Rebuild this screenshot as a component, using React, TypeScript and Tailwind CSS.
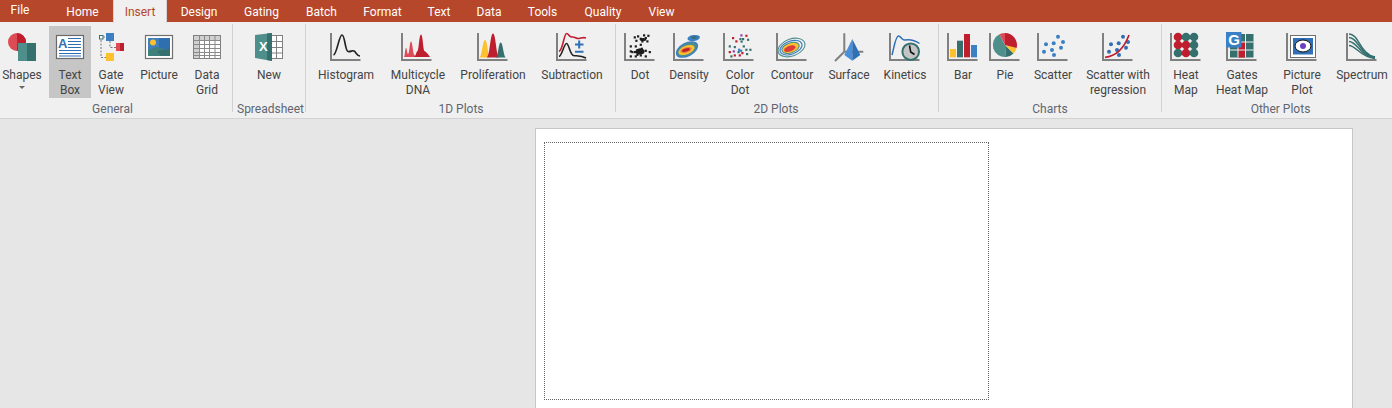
import type { ReactNode } from "react"

const RED = "#BE1E2D"
const LIGHT_RED = "#DD4B55"
const TEAL = "#35706E"
const LIGHT_TEAL = "#4F8F8B"
const BLUE = "#3B7FC4"
const YELLOW = "#FDC12E"
const PURPLE = "#8A3FB0"

function Svg({ children }: { children: ReactNode }) {
  return (
    <svg width="32" height="32" viewBox="0 0 32 32" className="block shrink-0">
      {children}
    </svg>
  )
}

// L shaped plot axes shared by most of the icons
function Axes() {
  return <path d="M1 3V30H30.5" fill="none" stroke="#808080" strokeWidth="2" />
}

function Plot({ children }: { children: ReactNode }) {
  return (
    <Svg>
      <Axes />
      {children}
    </Svg>
  )
}

const ShapesIcon = () => (
  <Svg>
    <circle cx="11" cy="12" r="9" fill={LIGHT_RED} />
    <path d="M11 3a9 9 0 0 1 0 18z" fill={RED} />
    <rect x="12" y="13" width="9" height="18" fill={LIGHT_TEAL} />
    <rect x="21" y="13" width="9" height="18" fill={TEAL} />
  </Svg>
)

const TextBoxIcon = () => (
  <Svg>
    <rect x="2.5" y="5.5" width="27" height="23" fill="#fff" stroke="#6A6A6A" strokeWidth="1.2" />
    <text x="4" y="18" fontSize="13" fontWeight="700" fontFamily="Liberation Sans, sans-serif" fill="#2F6FB5">
      A
    </text>
    <path d="M14 8.5H27M14 11.5H27M14 14.5H27M14 17.5H27M5 20.5H27M5 23.5H27M5 26H27" stroke="#2F6FB5" />
  </Svg>
)

const GateViewIcon = () => (
  <Svg>
    <rect x="4.5" y="5.5" width="3.5" height="3.5" fill="#fff" stroke={TEAL} />
    <path d="M6 10V27.5H11M8 7H11M15 11V17.5H21" fill="none" stroke="#777" strokeDasharray="2 1.5" />
    <rect x="11" y="3" width="8" height="8" fill={BLUE} />
    <rect x="21" y="13" width="4" height="8" fill={LIGHT_RED} />
    <rect x="25" y="13" width="4" height="8" fill={RED} />
    <rect x="11" y="23" width="8" height="8" fill={YELLOW} />
  </Svg>
)

const PictureIcon = () => (
  <Svg>
    <rect x="2.5" y="5.5" width="27" height="23" fill="#fff" stroke="#6F6F6F" strokeWidth="1.2" />
    <rect x="5" y="8" width="22" height="18" fill="#3F7FBE" />
    <rect x="16" y="8" width="11" height="12" fill="#2F6FB0" />
    <circle cx="10" cy="12.5" r="3" fill={YELLOW} />
    <path d="M5 20L14 17L27 21V26H5Z" fill="#3F7F7C" />
    <path d="M14 21L27 19V26H18Z" fill={TEAL} />
  </Svg>
)

const DataGridIcon = () => (
  <Svg>
    <rect x="2.5" y="5.5" width="27" height="23" fill="#fff" stroke="#7F7F7F" />
    <rect x="3" y="6" width="26" height="4" fill="#D0D0D0" />
    <rect x="3" y="6" width="5" height="22" fill="#D0D0D0" />
    <path
      d="M8.5 5.5V28.5M13.5 5.5V28.5M18.5 5.5V28.5M24 5.5V28.5M2.5 10.5H29.5M2.5 14.5H29.5M2.5 18.5H29.5M2.5 22.5H29.5M2.5 25.5H29.5"
      stroke="#8A8A8A"
      fill="none"
    />
  </Svg>
)

const ExcelIcon = () => (
  <Svg>
    <rect x="18.5" y="5.5" width="11" height="23" fill="#fff" stroke="#808080" />
    <path d="M18.5 11.5H29.5M18.5 17.5H29.5M18.5 23H29.5M23.5 5.5V28.5" stroke="#808080" />
    <path d="M2 5L19 3V31L2 28Z" fill={LIGHT_TEAL} />
    <path d="M14 3.5L19 3V31L14 30Z" fill={TEAL} />
    <text x="6" y="21" fontSize="13" fontWeight="700" fontFamily="Liberation Sans, sans-serif" fill="#fff">
      X
    </text>
  </Svg>
)

const HistogramIcon = () => (
  <Plot>
    <path d="M3.5 25C7 24 9 5 12 5C15 5 15 21 18 21.5C21 22 22 20 24 21C26 22 27 26 30 26" fill="none" stroke="#222" strokeWidth="1.7" />
  </Plot>
)

const MulticycleIcon = () => (
  <Plot>
    <path d="M3 27C4 26 4 18 5 18C6 18 6 24 7 24C8.5 24 8.5 11.5 10 11.5C11.5 11.5 12 25 13.5 25L15 27Z" fill={LIGHT_RED} />
    <path d="M13 27C15 26 15 22 16.5 21C18 20 18 4.5 20 4.5C22 4.5 22 20 23.5 21C25 22 26 22.5 29 27Z" fill={RED} />
  </Plot>
)

const ProliferationIcon = () => (
  <Plot>
    <path d="M2.5 27.5C5 27 5.5 10 8 10C10.5 10 11 27 13 27.5Z" fill={YELLOW} />
    <path d="M9.5 27.5C13 27 13 3.5 16 3.5C19 3.5 19 27 22.5 27.5Z" fill={RED} />
    <path d="M19 27.5C21 27 21.5 12.5 23.7 12.5C26 12.5 26.5 27 29 27.5Z" fill={TEAL} />
  </Plot>
)

const SubtractionIcon = () => (
  <Plot>
    <path d="M3 21.5C7 20 8 3.5 10.5 3.5C13 3.5 13 7.5 16 7C19 6.5 20 9 23 8.5C26 8 27 7 30 8" fill="none" stroke={RED} strokeWidth="1.6" />
    <path d="M3 26.5C6 26 8 13.5 10.5 13.5C13 13.5 14 25 17.5 25.5C21 26 25 25.5 30 28" fill="none" stroke="#222" strokeWidth="1.6" />
    <path d="M19 14.5H27.5M23.2 10.5V18.5M19 21.7H27.5" fill="none" stroke="#2F6FB5" strokeWidth="2" />
  </Plot>
)

const dotPoints = [
  [10.7, 7.3], [14, 6.3], [20, 5.3], [24.3, 5.7], [12.3, 10.7], [16.7, 8.7], [19, 9.7], [21.7, 8], [18.3, 11.3], [23.3, 11.3],
  [6.7, 16.3], [11.7, 16.3], [16.7, 14.7], [8.3, 22], [6.7, 21.3], [11, 22], [13.3, 20.7], [15.7, 19.7], [17.7, 18.7], [19, 21.3],
  [15, 23], [13.3, 24.7], [16.7, 25.3], [21.7, 20.7], [25.7, 22], [11.7, 26.3], [6.7, 26.3], [21.7, 26.3],
]

const DotIcon = () => (
  <Plot>
    <ellipse cx="19" cy="9.5" rx="3.2" ry="1.6" fill="#1c1c1c" />
    <ellipse cx="16" cy="21.5" rx="4.5" ry="3" fill="#1c1c1c" />
    {dotPoints.map(([x, y]) => (
      <rect key={`${x}-${y}`} x={x - 1} y={y - 1} width="2.2" height="2.2" fill="#1c1c1c" />
    ))}
  </Plot>
)

const DensityIcon = () => (
  <Plot>
    <ellipse cx="20.7" cy="8" rx="6.3" ry="3" fill={BLUE} transform="rotate(-8 20.7 8)" />
    <ellipse cx="21" cy="7.6" rx="3" ry="1.4" fill={TEAL} />
    <ellipse cx="14" cy="19.5" rx="12" ry="7" fill={BLUE} transform="rotate(-28 14 19.5)" />
    <ellipse cx="14" cy="19.5" rx="10.5" ry="5.6" fill={LIGHT_TEAL} transform="rotate(-28 14 19.5)" />
    <ellipse cx="13.5" cy="20" rx="8.5" ry="4.2" fill={YELLOW} transform="rotate(-22 13.5 20)" />
    <ellipse cx="13" cy="20" rx="6" ry="2.6" fill="#EE7F3A" transform="rotate(-18 13 20)" />
    <ellipse cx="13" cy="20" rx="4" ry="1.5" fill={RED} transform="rotate(-15 13 20)" />
  </Plot>
)

const colorPoints: [number, number, string][] = [
  [18.3, 5.3, PURPLE], [17.3, 9, TEAL], [20, 9, TEAL], [18.5, 11.5, TEAL], [10, 8, RED], [23.3, 5.7, RED], [25, 9.7, TEAL], [13.3, 11.3, RED],
  [6.7, 16.3, TEAL], [11.7, 17, TEAL], [6.7, 22, RED], [10.7, 21.3, PURPLE], [16, 19.7, BLUE], [18, 20.7, BLUE], [15.5, 22, TEAL],
  [20.7, 16.3, TEAL], [23.3, 19.7, TEAL], [27.3, 19.7, TEAL], [19.3, 23, RED], [24, 24, TEAL], [11.7, 25.3, RED], [16.7, 25.3, RED], [8.3, 26.3, TEAL],
]

const ColorDotIcon = () => (
  <Plot>
    {colorPoints.map(([x, y, c]) => (
      <rect key={`${x}-${y}`} x={x - 1} y={y - 1} width="2.2" height="2.2" fill={c} />
    ))}
  </Plot>
)

const ContourIcon = () => (
  <Plot>
    <g transform="rotate(-20 15.5 17.5)" fill="none" strokeWidth="1.1">
      <ellipse cx="15.5" cy="17.5" rx="14" ry="8.5" stroke={LIGHT_TEAL} />
      <ellipse cx="15" cy="17.5" rx="11.5" ry="6.5" stroke={BLUE} />
      <ellipse cx="14.5" cy="17.5" rx="9" ry="5" fill={YELLOW} stroke={LIGHT_TEAL} />
      <ellipse cx="13.5" cy="18" rx="6" ry="2.8" fill="#DD3B3B" stroke="none" />
    </g>
  </Plot>
)

const SurfaceIcon = () => (
  <Svg>
    <path d="M11.3 3.3V21.7H30.3M11.3 21.7L2 31" fill="none" stroke="#808080" strokeWidth="2" />
    <path d="M19.3 9L11.3 25L19.3 30.7Z" fill="#4A90D9" />
    <path d="M19.3 9L27.3 25L19.3 30.7Z" fill="#2F6FB5" />
  </Svg>
)

const KineticsIcon = () => (
  <Plot>
    <path d="M3 25C5 18 6.5 6 9.5 6C12 6 13 10.5 16 10C19 9.5 24 9 30.5 13.5" fill="none" stroke="#2F6FB5" strokeWidth="1.5" />
    <circle cx="21.7" cy="21.7" r="8.3" fill="#C4C4C4" stroke={TEAL} strokeWidth="2" />
    <path d="M20.5 15.5L21.7 22L25.5 24.5" fill="none" stroke="#111" strokeWidth="1.6" />
  </Plot>
)

const BarIcon = () => (
  <Plot>
    <rect x="3" y="19" width="6" height="8.3" fill={YELLOW} />
    <rect x="10" y="10.7" width="6" height="16.6" fill={TEAL} />
    <rect x="17" y="4" width="6" height="23.3" fill={RED} />
    <rect x="24" y="15" width="6" height="12.3" fill={BLUE} />
  </Plot>
)

const PieIcon = () => (
  <Plot>
    <path d="M16 15L10.5 4.3A12 12 0 0 0 17 27Z" fill={LIGHT_TEAL} />
    <path d="M16 15L17 27A12 12 0 0 0 24.5 23.5Z" fill={TEAL} />
    <path d="M16 15L24.5 23.5A12 12 0 0 0 27.6 18.1Z" fill={YELLOW} />
    <path d="M16 15L27.6 18.1A12 12 0 0 0 16 3Z" fill={RED} />
    <path d="M16 15L16 3A12 12 0 0 0 10.5 4.3Z" fill={LIGHT_RED} />
  </Plot>
)

const scatterPoints = [[7, 21.7], [9, 14.3], [15, 20], [16.7, 13.3], [17, 25], [21, 6.7], [24, 17.7], [26, 12]]

const ScatterIcon = () => (
  <Plot>
    {scatterPoints.map(([x, y]) => (
      <circle key={x} cx={x} cy={y} r="2" fill={BLUE} />
    ))}
  </Plot>
)

const ScatterRegressionIcon = () => (
  <Plot>
    {scatterPoints.map(([x, y]) => (
      <circle key={x} cx={x} cy={y} r="2" fill="#2F6FB5" />
    ))}
    <path d="M3 27.3C12 26.5 21 21 27 5" fill="none" stroke={RED} strokeWidth="1.7" />
  </Plot>
)

const heatCells = [
  [8, 7, RED], [16, 7, TEAL], [24, 7, TEAL],
  [8, 15, RED], [16, 15, RED], [24, 15, TEAL],
  [8, 23, TEAL], [16, 23, RED], [24, 23, TEAL],
] as const

const HeatMapIcon = () => (
  <Plot>
    {heatCells.map(([x, y, c]) => (
      <circle key={`${x}-${y}`} cx={x} cy={y} r="4.3" fill={c} />
    ))}
  </Plot>
)

const GatesHeatMapIcon = () => (
  <Plot>
    <rect x="4" y="4" width="23.5" height="23.5" fill={TEAL} />
    <rect x="12" y="12" width="7.5" height="15.5" fill={RED} />
    <path d="M12 4V27.5M19.5 4V27.5M4 12H27.5M4 20H27.5" stroke="#F0F0F0" fill="none" />
    <rect x="0" y="2" width="15.5" height="15.5" fill={BLUE} />
    <text x="2.3" y="15" fontSize="15" fontWeight="700" fontFamily="Liberation Sans, sans-serif" fill="#fff">
      G
    </text>
  </Plot>
)

const PicturePlotIcon = () => (
  <Plot>
    <rect x="4.5" y="5.5" width="25" height="22" fill="#fff" stroke="#707070" />
    <rect x="7" y="8" width="20" height="16.5" fill="#2F6FB5" />
    <ellipse cx="17" cy="16" rx="8" ry="6" fill="#fff" stroke="#111" />
    <circle cx="17" cy="16" r="3" fill="#6B3FC4" />
  </Plot>
)

const SpectrumIcon = () => (
  <Plot>
    <g fill="none" stroke={TEAL} strokeWidth="1.5">
      <path d="M3 4C13 4 14 24 29 27" />
      <path d="M3 7.5C12 7.5 14 25 29 27.5" />
      <path d="M3 11.5C11 11.5 14 26 29 28" />
      <path d="M3 15.5C10 15.5 14 27 29 28.5" />
    </g>
  </Plot>
)

type Item = { lines: string[]; icon: () => ReactNode; w: string; nudge?: string; active?: boolean; caret?: boolean }

const groups: { label: string; box: string; labelBox?: string; items: Item[] }[] = [
  {
    label: "General",
    box: "w-[233px] pl-0",
    labelBox: "pr-[7px]",
    items: [
      { lines: ["Shapes"], icon: ShapesIcon, w: "w-[44px] mr-[5px]", caret: true },
      { lines: ["Text", "Box"], icon: TextBoxIcon, w: "w-[42px]", active: true },
      { lines: ["Gate", "View"], icon: GateViewIcon, w: "w-[40px]" },
      { lines: ["Picture"], icon: PictureIcon, w: "w-[56px]" },
      { lines: ["Data", "Grid"], icon: DataGridIcon, w: "w-[40px]" },
    ],
  },
  {
    label: "Spreadsheet",
    box: "w-[73px] pl-[4px] pr-[3px]",
    labelBox: "pr-[2px]",
    items: [{ lines: ["New"], icon: ExcelIcon, w: "w-[64px]" }],
  },
  {
    label: "1D Plots",
    box: "w-[310px] pl-[6px]",
    labelBox: "pr-[5px]",
    items: [
      { lines: ["Histogram"], icon: HistogramIcon, w: "w-[68px]" },
      { lines: ["Multicycle", "DNA"], icon: MulticycleIcon, w: "w-[76px]", nudge: "mr-[3px]" },
      { lines: ["Proliferation"], icon: ProliferationIcon, w: "w-[74px]" },
      { lines: ["Subtraction"], icon: SubtractionIcon, w: "w-[84px]" },
    ],
  },
  {
    label: "2D Plots",
    box: "w-[323px] pl-[4px]",
    labelBox: "pr-[6px]",
    items: [
      { lines: ["Dot"], icon: DotIcon, w: "w-[40px]" },
      { lines: ["Density"], icon: DensityIcon, w: "w-[58px]" },
      { lines: ["Color", "Dot"], icon: ColorDotIcon, w: "w-[44px]", nudge: "mr-[3px]" },
      { lines: ["Contour"], icon: ContourIcon, w: "w-[60px]" },
      { lines: ["Surface"], icon: SurfaceIcon, w: "w-[54px]" },
      { lines: ["Kinetics"], icon: KineticsIcon, w: "w-[58px]" },
    ],
  },
  {
    label: "Charts",
    box: "w-[223px] pl-[4px]",
    labelBox: "pr-[4px]",
    items: [
      { lines: ["Bar"], icon: BarIcon, w: "w-[40px]" },
      { lines: ["Pie"], icon: PieIcon, w: "w-[44px]" },
      { lines: ["Scatter"], icon: ScatterIcon, w: "w-[52px]" },
      { lines: ["Scatter with", "regression"], icon: ScatterRegressionIcon, w: "w-[78px]" },
    ],
  },
  {
    label: "Other Plots",
    box: "w-[236px] shrink-0 pl-[4px]",
    labelBox: "pr-[2px]",
    items: [
      { lines: ["Heat", "Map"], icon: HeatMapIcon, w: "w-[40px]" },
      { lines: ["Gates", "Heat Map"], icon: GatesHeatMapIcon, w: "w-[72px]" },
      { lines: ["Picture", "Plot"], icon: PicturePlotIcon, w: "w-[48px]" },
      { lines: ["Spectrum"], icon: SpectrumIcon, w: "w-[72px]" },
    ],
  },
]

const tabs = [
  { name: "Home", w: "w-[61px]" },
  { name: "Insert", w: "w-[54px]", active: true },
  { name: "Design", w: "w-[64px]" },
  { name: "Gating", w: "w-[61px]" },
  { name: "Batch", w: "w-[59px]" },
  { name: "Format", w: "w-[63px]" },
  { name: "Text", w: "w-[50px]" },
  { name: "Data", w: "w-[50px]" },
  { name: "Tools", w: "w-[57px]" },
  { name: "Quality", w: "w-[64px]" },
  { name: "View", w: "w-[53px]" },
]

function RibbonButton({ item }: { item: Item }) {
  const Icon = item.icon
  return (
    <div
      className={`${item.w} h-[72px] shrink-0 flex flex-col items-center pt-[4px] whitespace-nowrap ${
        item.active ? "bg-[#C6C6C6]" : ""
      }`}
    >
      <div className={item.nudge}>
        <Icon />
      </div>
      <div className="mt-[6px] text-center leading-[15px]">
        {item.lines.map((line) => (
          <div key={line}>{line}</div>
        ))}
        {item.caret && <div className="mx-auto mt-[3px] w-0 h-0 border-x-[3px] border-x-transparent border-t-[3px] border-t-[#666]" />}
      </div>
    </div>
  )
}

export default function App() {
  return (
    <div className="h-[408px] overflow-hidden bg-[#E6E6E6] text-[12px] text-[#444] font-['Roboto',sans-serif]">
      <div className="h-[22px] flex bg-[#B7472A] text-white">
        <div className="w-[52px] h-[22px] shrink-0 pr-[12px] text-center leading-[20px]">File</div>
        {tabs.map((tab) => (
          <div
            key={tab.name}
            className={`${tab.w} shrink-0 h-[23px] text-center leading-[25px] ${
              tab.active ? "relative bg-[#F0F0F0] text-[#B7472A] border-x border-x-[#D4D4D4]" : ""
            }`}
          >
            {tab.name}
          </div>
        ))}
      </div>

      <div className="h-[97px] flex pt-[2px] bg-[#F0F0F0] border-b border-b-[#D2D2D2] overflow-hidden">
        {groups.map((group) => (
          <div key={group.label} className={`${group.box} h-[88px] shrink-0 border-r border-r-[#D0D0D0]`}>
            <div className="flex pt-[2px]">
              {group.items.map((item) => (
                <RibbonButton key={item.lines.join(" ")} item={item} />
              ))}
            </div>
            <div className={`mt-[3px] leading-[16px] text-center whitespace-nowrap text-[#5F6670] ${group.labelBox ?? ""}`}>{group.label}</div>
          </div>
        ))}
      </div>

      <div className="pl-[535px] pt-[9px]">
        <div className="w-[818px] h-[300px] bg-white border-x border-t border-[#C6C6C6] pt-[13px] pl-[8px]">
          <div className="w-[445px] h-[258px] border border-dotted border-[#666]" />
        </div>
      </div>
    </div>
  )
}
